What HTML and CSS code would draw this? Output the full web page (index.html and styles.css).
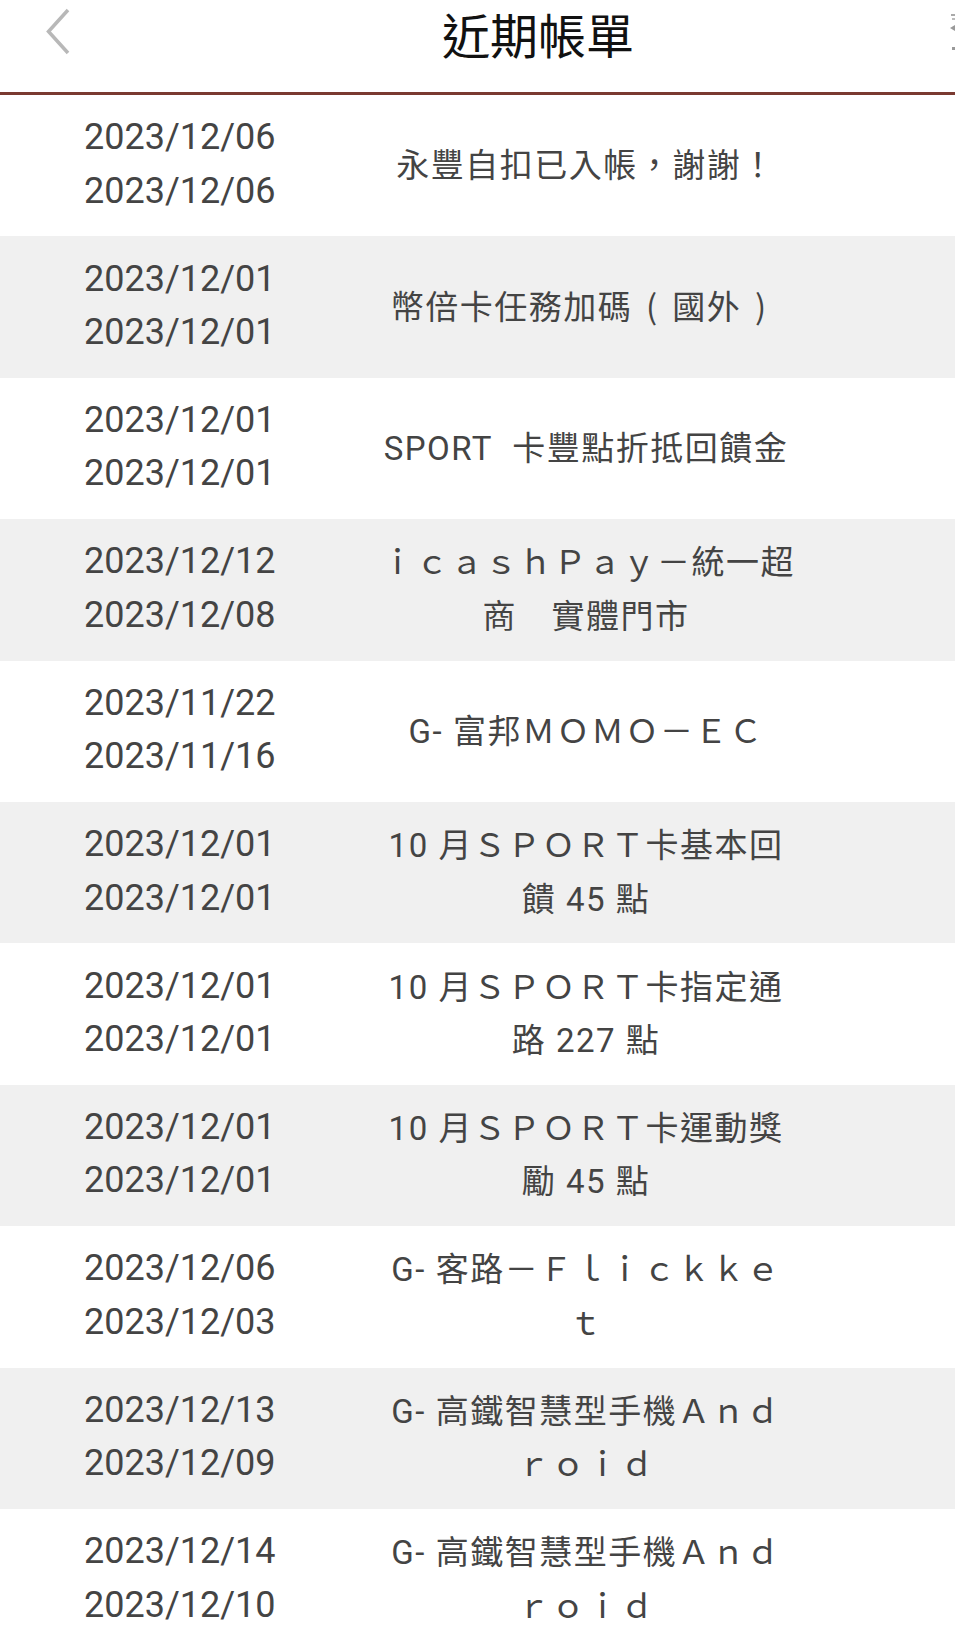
FILE: index.html
```html
<!DOCTYPE html>
<html lang="zh-Hant">
<head>
  <meta charset="UTF-8" />
  <title>近期帳單</title>
  <link rel="stylesheet" href="styles.css">
</head>
<body>
  <header class="top-bar">
    <a class="back" href="#">
      <svg width="26" height="48" viewBox="0 0 26 48">
        <polyline points="23,2 3.5,23.5 23,45" fill="none" stroke="#b8b8b8" stroke-width="3.5" />
      </svg>
    </a>
    <h1 class="title">近期帳單</h1>
    <span class="more">
      <svg width="5" height="48" viewBox="0 0 5 48">
        <rect x="1" y="2" width="4" height="2" fill="#aaa" />
        <rect x="2" y="6" width="3" height="2" fill="#bbb" />
        <polygon points="0,16 5,13 5,19" fill="#999" />
        <rect x="2" y="35" width="3" height="3" fill="#999" />
      </svg>
    </span>
  </header>

  <main class="bill-list">
    <div class="bill-row">
      <div class="bill-dates"><div>2023/12/06</div><div>2023/12/06</div></div>
      <div class="bill-desc">永豐自扣已入帳，謝謝！</div>
    </div>
    <div class="bill-row">
      <div class="bill-dates"><div>2023/12/01</div><div>2023/12/01</div></div>
      <div class="bill-desc">幣倍卡任務加碼<span class="paren">(</span>國外<span class="paren">)</span></div>
    </div>
    <div class="bill-row">
      <div class="bill-dates"><div>2023/12/01</div><div>2023/12/01</div></div>
      <div class="bill-desc">SPORT&nbsp;&nbsp;卡豐點折抵回饋金</div>
    </div>
    <div class="bill-row">
      <div class="bill-dates"><div>2023/12/12</div><div>2023/12/08</div></div>
      <div class="bill-desc">ｉｃａｓｈＰａｙ－統一超<br>商　實體門市</div>
    </div>
    <div class="bill-row">
      <div class="bill-dates"><div>2023/11/22</div><div>2023/11/16</div></div>
      <div class="bill-desc">G- 富邦ＭＯＭＯ－ＥＣ</div>
    </div>
    <div class="bill-row">
      <div class="bill-dates"><div>2023/12/01</div><div>2023/12/01</div></div>
      <div class="bill-desc">10 月ＳＰＯＲＴ卡基本回<br>饋 45 點</div>
    </div>
    <div class="bill-row">
      <div class="bill-dates"><div>2023/12/01</div><div>2023/12/01</div></div>
      <div class="bill-desc">10 月ＳＰＯＲＴ卡指定通<br>路 227 點</div>
    </div>
    <div class="bill-row">
      <div class="bill-dates"><div>2023/12/01</div><div>2023/12/01</div></div>
      <div class="bill-desc">10 月ＳＰＯＲＴ卡運動獎<br>勵 45 點</div>
    </div>
    <div class="bill-row">
      <div class="bill-dates"><div>2023/12/06</div><div>2023/12/03</div></div>
      <div class="bill-desc">G- 客路－Ｆｌｉｃｋｋｅ<br>ｔ</div>
    </div>
    <div class="bill-row">
      <div class="bill-dates"><div>2023/12/13</div><div>2023/12/09</div></div>
      <div class="bill-desc">G- 高鐵智慧型手機Ａｎｄ<br>ｒｏｉｄ</div>
    </div>
    <div class="bill-row">
      <div class="bill-dates"><div>2023/12/14</div><div>2023/12/10</div></div>
      <div class="bill-desc">G- 高鐵智慧型手機Ａｎｄ<br>ｒｏｉｄ</div>
    </div>
  </main>
</body>
</html>
```

FILE: styles.css
```css
/* General Styling */
body {
  margin: 0;
  padding: 0;
  background-color: #fff;
  font-family: Roboto, "Noto Sans CJK TC", sans-serif;
  color: #444;
  overflow: hidden;
}

/* Top bar */
.top-bar {
  display: flex;
  align-items: flex-start;
  height: 92px;
  border-bottom: 3px solid #7a3a31;
}

.back {
  display: block;
  width: 126px;
  height: 92px;
  padding: 8px 0 0 45px;
  box-sizing: border-box;
}

.title {
  flex: 1;
  margin: 0;
  padding-top: 9px;
  text-align: center;
  font-family: "Noto Sans CJK TC", sans-serif;
  font-size: 48px;
  font-weight: 400;
  line-height: 48px;
  color: #111;
}

.more {
  display: block;
  width: 5px;
  padding-top: 12px;
  overflow: hidden;
}

/* Bill rows */
.bill-row {
  display: flex;
  align-items: center;
  height: 141.4px;
  padding-left: 84px;
}

.bill-row:nth-child(even) {
  background-color: #f0f0f0;
}

.bill-dates {
  width: 297px;
  margin-top: -2px;
  font-size: 36px;
  line-height: 53.5px;
}

.bill-desc {
  width: 410px;
  text-align: center;
  font-size: 33px;
  letter-spacing: 1.5px;
  line-height: 53.5px;
  white-space: nowrap;
}

.paren {
  display: inline-block;
  width: 40px;
  text-align: center;
  font-family: "Noto Sans CJK TC", sans-serif;
}
```
